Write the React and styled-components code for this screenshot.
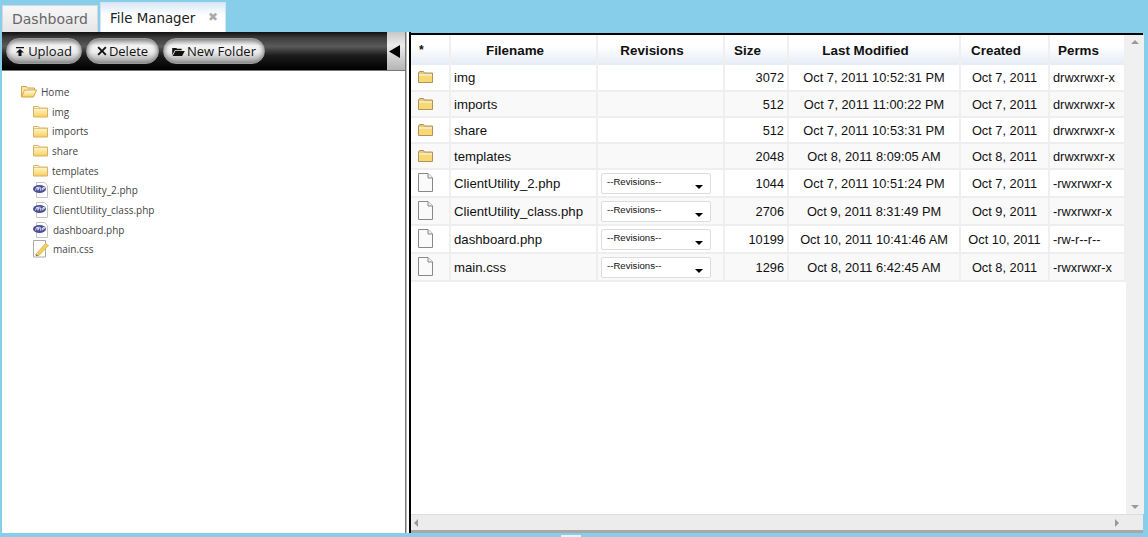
import React from "react"
import styled, { createGlobalStyle } from "styled-components"

const Global = createGlobalStyle`
  html, body { margin: 0; padding: 0; }
  body { background: #87ceeb; overflow: hidden; }
  * { box-sizing: border-box; }
`

const Page = styled.div`
  width: 1148px;
  height: 537px;
  display: flex;
  flex-direction: column;
  background: #87ceeb;
  overflow: hidden;
`

const TabBar = styled.div`
  height: 32px;
  display: flex;
  align-items: flex-end;
  gap: 2px;
  padding-left: 2px;
  flex: none;
`

const Tab = styled.div`
  height: ${p => (p.$active ? "30px" : "27px")};
  width: ${p => (p.$active ? "126px" : "96px")};
  padding: ${p => (p.$active ? "8px 0 0 9px" : "5px 0 0 9px")};
  font: ${p => (p.$active ? "13.4px" : "14px")} "DejaVu Sans", sans-serif;
  color: ${p => (p.$active ? "#222" : "#666")};
  border: 1px solid ${p => (p.$active ? "#d4e3ef" : "#d8d8d8")};
  border-bottom: 0;
  background: ${p =>
    p.$active
      ? "linear-gradient(#dbe9f6, #fff 45%)"
      : "linear-gradient(#f7f7f7, #e6e6e6)"};
  display: flex;
  justify-content: space-between;
  white-space: nowrap;
`

const TabClose = styled.span`
  color: #aaa;
  font: bold 12px "DejaVu Sans", sans-serif;
  margin: -1px 7px 0 0;
  line-height: 14px;
`

const Workspace = styled.div`
  display: flex;
  margin: 0 5px 0 2px;
  height: 501px;
  flex: none;
`

const LeftPane = styled.div`
  width: 403px;
  display: flex;
  flex-direction: column;
  flex: none;
  background: #fff;
`

const Toolbar = styled.div`
  height: 39px;
  display: flex;
  align-items: flex-start;
  background: linear-gradient(#111 0, #3c3c3c 15%, #5a5a5a 38%, #1c1c1c 62%, #000 100%);
  border-bottom: 1px solid #777;
  padding-left: 4px;
  flex: none;
`

const PillRow = styled.div`
  display: flex;
  gap: 4px;
  padding-top: 6px;
  flex: 1;
`

const Pill = styled.button`
  height: 26px;
  width: ${p => p.$w}px;
  border-radius: 13px;
  border: 1px solid #9a9a9a;
  background: linear-gradient(#a8a8a8, #f4f4f4 28%, #ececec 55%, #a4a4a4);
  box-shadow: inset 0 0 5px #6e6e6e;
  font: 13px "Open Sans", "DejaVu Sans", sans-serif;
  color: #111;
  padding: 0;
  display: flex;
  align-items: center;
  justify-content: center;
  gap: ${p => p.$gap || 2}px;
  white-space: nowrap;
`

const Collapse = styled.div`
  width: 18px;
  height: 38px;
  background: linear-gradient(#c8c8c8, #ececec 35%, #b4b4b4);
  display: flex;
  align-items: center;
  justify-content: center;
  padding-right: 3px;
`

const Tree = styled.ul`
  list-style: none;
  margin: 0;
  padding: 11px 0 0 19px;
  font: 10px "Open Sans", "DejaVu Sans", sans-serif;
  color: #444;
`

const TreeRow = styled.li`
  height: 19.7px;
  display: flex;
  align-items: center;
  gap: 4px;
  padding-left: ${p => (p.$child ? "12px" : "0")};
`

const Splitter = styled.div`
  width: 6px;
  flex: none;
  background: #fff;
  border-left: 1px solid #777;
  border-right: 2px solid #000;
  box-shadow: inset 1px 0 0 #bbb;
`

const RightPane = styled.div`
  flex: 1;
  display: flex;
  flex-direction: column;
  background: #fff;
  margin-top: 1px;
  border-top: 2px solid #000;
  min-width: 0;
`

const TableRow = styled.div`
  flex: 1;
  display: flex;
  min-height: 0;
`

const GridWrap = styled.div`
  flex: 1;
`

const Grid = styled.table`
  border-collapse: collapse;
  table-layout: fixed;
  width: 714px;
  font: 12.8px "Liberation Sans", Arial, sans-serif;
  color: #111;
`

const Head = styled.th`
  height: 30px;
  padding: 0 17px 0 0;
  font-size: 13.4px;
  font-weight: bold;
  background: linear-gradient(#fff 35%, #e6ecf5);
  border-right: 2px solid #efefef;
  text-align: center;
`

const StarHead = styled(Head)`
  font-size: 12px;
  text-align: left;
  padding: 0 0 0 8px;
`

const Row = styled.tr`
  height: ${p => (p.$file ? "28px" : "26px")};
  background: ${p => (p.$odd ? "#f9f9f9" : "#fff")};
  border-bottom: 2px solid #eeeeee;
`

const Cell = styled.td`
  padding: 0 3px;
  border-right: 2px solid #efefef;
  text-align: ${p => p.$align || "left"};
  white-space: nowrap;
  overflow: hidden;
`

const NameCell = styled(Cell)`
  font-size: 13.2px;
`

const IconCell = styled(Cell)`
  padding: 2px 0 0 7px;
`

const RevSelect = styled.div`
  width: 110px;
  height: 21px;
  margin-top: 1px;
  border: 1px solid #ddd;
  border-radius: 2px;
  background: #fff;
  font: 9.6px "Liberation Sans", Arial, sans-serif;
  display: flex;
  justify-content: space-between;
  padding: 2px 7px 0 5px;
`

const RevCaret = styled.span`
  width: 0;
  height: 0;
  margin-top: 9px;
  border: 4px solid transparent;
  border-top: 4px solid #000;
  border-bottom: 0;
`

const VBar = styled.div`
  width: 18px;
  flex: none;
  background: #f0f0f0;
  display: flex;
  flex-direction: column;
  justify-content: space-between;
  align-items: center;
  padding: 5px 0;
`

const HBar = styled.div`
  height: 16px;
  flex: none;
  background: #ececec;
  border-top: 1px solid #ddd;
  display: flex;
  justify-content: space-between;
  align-items: center;
  padding: 0 24px 0 3px;
`

const BottomEdge = styled.div`
  height: 3px;
  flex: none;
  background: #a8a8a8;
`

const Arrow = styled.span`
  width: 0;
  height: 0;
  border: 4px solid transparent;
  ${p => p.$dir === "up" && "border-bottom: 4px solid #999; border-top: 0;"}
  ${p => p.$dir === "down" && "border-top: 4px solid #999; border-bottom: 0;"}
  ${p => p.$dir === "left" && "border-right: 4px solid #999; border-left: 0;"}
  ${p => p.$dir === "right" && "border-left: 4px solid #999; border-right: 0;"}
`

const Grip = styled.div`
  position: absolute;
  left: 561px;
  top: 535px;
  width: 20px;
  height: 2px;
  background: #e8f2f7;
`

const FolderGradient = () => (
  <defs>
    <linearGradient id="fold" x1="0" y1="0" x2="0" y2="1">
      <stop offset="0" stopColor="#fffdf0" />
      <stop offset="1" stopColor="#f8cf55" />
    </linearGradient>
  </defs>
)

const TreeFolder = () => (
  <svg width="15" height="13" viewBox="0 0 15 13">
    <FolderGradient />
    <path d="M.5 1.5 h5 l1 1.5 h8 v9 h-14z" fill="url(#fold)" stroke="#d8b264" />
    <path d="M1 3.5 h13" stroke="#e4c47c" />
  </svg>
)

const OpenFolder = () => (
  <svg width="16" height="13" viewBox="0 0 16 13">
    <FolderGradient />
    <path d="M.5 12 V1.5 h5 l1 1.5 h7 v2" fill="#fbe7a8" stroke="#d8a24c" />
    <path d="M3.5 5 h12 l-3 7 h-12z" fill="url(#fold)" stroke="#d8a24c" />
  </svg>
)

const RowFolder = () => (
  <svg width="15" height="12" viewBox="0 0 15 12">
    <path d="M.5 2 L1.5 .5 h4 l1 1.5 h8 v9.5 h-14z" fill="#e9c878" stroke="#b49257" />
    <rect x="1" y="3" width="13" height="2" fill="#f5e7bc" />
    <rect x="1" y="5" width="13" height="6" fill="#f8d873" />
  </svg>
)

const PageIcon = () => (
  <svg width="15" height="19" viewBox="0 0 15 19">
    <path d="M.5 .5 h9.5 l4.5 4.5 v13.5 h-14z" fill="#fafafa" stroke="#888" />
    <path d="M10 .5 v4.5 h4.5" fill="#eee" stroke="#888" />
  </svg>
)

const PhpIcon = () => (
  <svg width="16" height="16" viewBox="0 0 16 16">
    <path d="M3.5 .5 h8 l3 3 v12 h-11z" fill="#fff" stroke="#c4c4c4" />
    <ellipse cx="6.5" cy="7" rx="6.5" ry="4" fill="#4c4f97" />
    <path d="M2.5 8.5 l1-3 h1.5 l-.5 2 M6 4.5 l-1 4 M6 6 h2 l-.5 2.5 M9 8.5 l1-3 h1.5 l-.3 1.5 h-1.5" stroke="#fff" strokeWidth=".8" fill="none" />
  </svg>
)

const CssIcon = () => (
  <svg width="16" height="18" viewBox="0 0 16 18">
    <path d="M.5 .5 h12 v16.5 h-12z" fill="#fff" stroke="#aaa" />
    <path d="M2.5 14.5 L12.5 3.5 L15.5 5.5 L6 15.5 Z" fill="#f2cf5f" stroke="#c9a038" strokeWidth=".6" />
    <path d="M2.5 14.5 L3 16 L6 15.5z" fill="#666" />
  </svg>
)

const UploadGlyph = () => (
  <svg width="8" height="9" viewBox="0 0 8 9">
    <path d="M0 0h8v1.2H0z M4 2 L8 5.5H5.5V9H2.5V5.5H0z" fill="#111" />
  </svg>
)

const DeleteGlyph = () => (
  <svg width="10" height="10" viewBox="0 0 11 11">
    <path d="M2 0.5 L5.5 4 L9 .5 L10.5 2 L7 5.5 L10.5 9 L9 10.5 L5.5 7 L2 10.5 L.5 9 L4 5.5 L.5 2z" fill="#111" />
  </svg>
)

const FolderGlyph = () => (
  <svg width="13" height="9" viewBox="0 0 14 10">
    <path d="M0 1 h4.5 l1 1 h5 v1.5 H3 L0 9z" fill="#111" />
    <path d="M3.5 4.5 H14 L11 10 H.5z" fill="#111" />
  </svg>
)

const treeItems = [
  { name: "img", kind: "folder" },
  { name: "imports", kind: "folder" },
  { name: "share", kind: "folder" },
  { name: "templates", kind: "folder" },
  { name: "ClientUtility_2.php", kind: "php" },
  { name: "ClientUtility_class.php", kind: "php" },
  { name: "dashboard.php", kind: "php" },
  { name: "main.css", kind: "css" },
]

const treeIcon = {
  folder: <TreeFolder />,
  php: <PhpIcon />,
  css: <CssIcon />,
}

const files = [
  ["img", "3072", "Oct 7, 2011 10:52:31 PM", "Oct 7, 2011", "drwxrwxr-x"],
  ["imports", "512", "Oct 7, 2011 11:00:22 PM", "Oct 7, 2011", "drwxrwxr-x"],
  ["share", "512", "Oct 7, 2011 10:53:31 PM", "Oct 7, 2011", "drwxrwxr-x"],
  ["templates", "2048", "Oct 8, 2011 8:09:05 AM", "Oct 8, 2011", "drwxrwxr-x"],
  ["ClientUtility_2.php", "1044", "Oct 7, 2011 10:51:24 PM", "Oct 7, 2011", "-rwxrwxr-x", true],
  ["ClientUtility_class.php", "2706", "Oct 9, 2011 8:31:49 PM", "Oct 9, 2011", "-rwxrwxr-x", true],
  ["dashboard.php", "10199", "Oct 10, 2011 10:41:46 AM", "Oct 10, 2011", "-rw-r--r--", true],
  ["main.css", "1296", "Oct 8, 2011 6:42:45 AM", "Oct 8, 2011", "-rwxrwxr-x", true],
]

const widths = [39, 147, 127, 64, 172, 89, 76]

export default function App() {
  return (
    <Page>
      <Global />
      <TabBar>
        <Tab>Dashboard</Tab>
        <Tab $active>
          File Manager
          <TabClose>✖</TabClose>
        </Tab>
      </TabBar>
      <Workspace>
        <LeftPane>
          <Toolbar>
            <PillRow>
              <Pill $w={76} $gap={4}><UploadGlyph />Upload</Pill>
              <Pill $w={73}><DeleteGlyph />Delete</Pill>
              <Pill $w={102}><FolderGlyph />New Folder</Pill>
            </PillRow>
            <Collapse>
              <svg width="11" height="13" viewBox="0 0 11 13">
                <path d="M0 6.5 L11 0 V13z" fill="#000" />
              </svg>
            </Collapse>
          </Toolbar>
          <Tree>
            <TreeRow>
              <OpenFolder />
              <span>Home</span>
            </TreeRow>
            {treeItems.map(item => (
              <TreeRow $child key={item.name}>
                {treeIcon[item.kind]}
                <span>{item.name}</span>
              </TreeRow>
            ))}
          </Tree>
        </LeftPane>
        <Splitter />
        <RightPane>
          <TableRow>
            <GridWrap>
              <Grid>
                <colgroup>
                  {widths.map((w, i) => (
                    <col key={i} style={{ width: w }} />
                  ))}
                </colgroup>
                <thead>
                  <tr>
                    <StarHead>*</StarHead>
                    <Head>Filename</Head>
                    <Head>Revisions</Head>
                    <Head>Size</Head>
                    <Head>Last Modified</Head>
                    <Head>Created</Head>
                    <Head>Perms</Head>
                  </tr>
                </thead>
                <tbody>
                  {files.map(([name, size, modified, created, perms, isFile], i) => (
                    <Row key={name} $file={isFile} $odd={i % 2 === 1}>
                      <IconCell>{isFile ? <PageIcon /> : <RowFolder />}</IconCell>
                      <NameCell>{name}</NameCell>
                      <Cell>
                        {isFile && (
                          <RevSelect>
                            --Revisions--
                            <RevCaret />
                          </RevSelect>
                        )}
                      </Cell>
                      <Cell $align="right">{size}</Cell>
                      <Cell $align="center">{modified}</Cell>
                      <Cell $align="center">{created}</Cell>
                      <Cell>{perms}</Cell>
                    </Row>
                  ))}
                </tbody>
              </Grid>
            </GridWrap>
            <VBar>
              <Arrow $dir="up" />
              <Arrow $dir="down" />
            </VBar>
          </TableRow>
          <HBar>
            <Arrow $dir="left" />
            <Arrow $dir="right" />
          </HBar>
          <BottomEdge />
        </RightPane>
      </Workspace>
      <Grip />
    </Page>
  )
}
